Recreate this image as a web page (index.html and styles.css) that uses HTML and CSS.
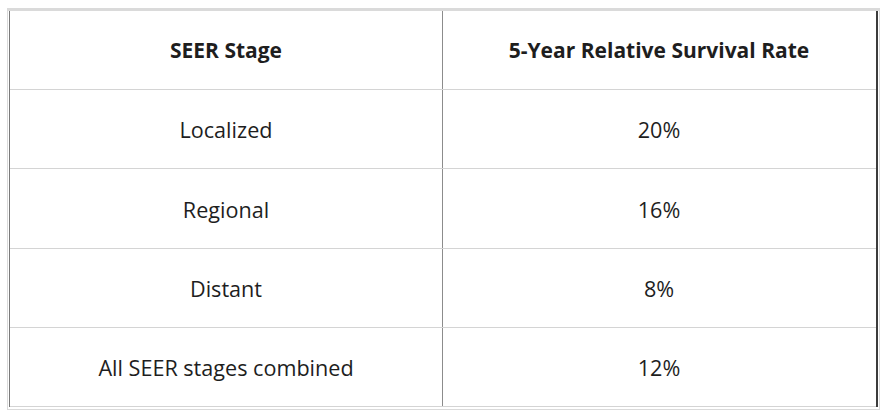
FILE: index.html
```html
<!DOCTYPE html>
<html lang="en">
<head>
<meta charset="utf-8">
<title>SEER Stage Survival Rates</title>
<link rel="stylesheet" href="styles.css">
</head>
<body>
<div class="frame">
  <div class="table">
    <div class="row head r1">
      <div class="cell">SEER Stage</div>
      <div class="cell">5-Year Relative Survival Rate</div>
    </div>
    <div class="row r2">
      <div class="cell">Localized</div>
      <div class="cell">20%</div>
    </div>
    <div class="row r3">
      <div class="cell">Regional</div>
      <div class="cell">16%</div>
    </div>
    <div class="row r4">
      <div class="cell">Distant</div>
      <div class="cell">8%</div>
    </div>
    <div class="row r5">
      <div class="cell">All SEER stages combined</div>
      <div class="cell">12%</div>
    </div>
  </div>
</div>
</body>
</html>
```

FILE: styles.css
```css
html, body {
  margin: 0;
  padding: 0;
  background: #ffffff;
}
body {
  padding: 8px 0 0 7px;
  font-family: "Open Sans", "Liberation Sans", sans-serif;
  color: #1e1e1e;
}
.frame {
  width: 870px;
  border-top: 3px solid #dadada;
  border-left: 1px solid #dadada;
  border-right: 1px solid #dadada;
  border-bottom: 1px solid #dadada;
  padding: 0 0 2px 1px;
  box-sizing: content-box;
}
.table {
  width: 866px;
  border-left: 1px solid #7a7a7a;
  border-right: 2px solid #3c3c3c;
}
.row {
  display: flex;
  height: 78px;
  border-bottom: 1px solid #d4d4d4;
}
.row.r3 {
  height: 79px;
}
.cell {
  display: flex;
  align-items: center;
  justify-content: center;
  box-sizing: border-box;
  padding-top: 2px;
  font-size: 21.6px;
  line-height: 1;
}
.cell:first-child {
  width: 433px;
  border-right: 1px solid #8c8c8c;
}
.cell:last-child {
  width: 432px;
}
.head .cell {
  font-weight: 700;
  font-size: 21px;
  padding-top: 1px;
}
```
